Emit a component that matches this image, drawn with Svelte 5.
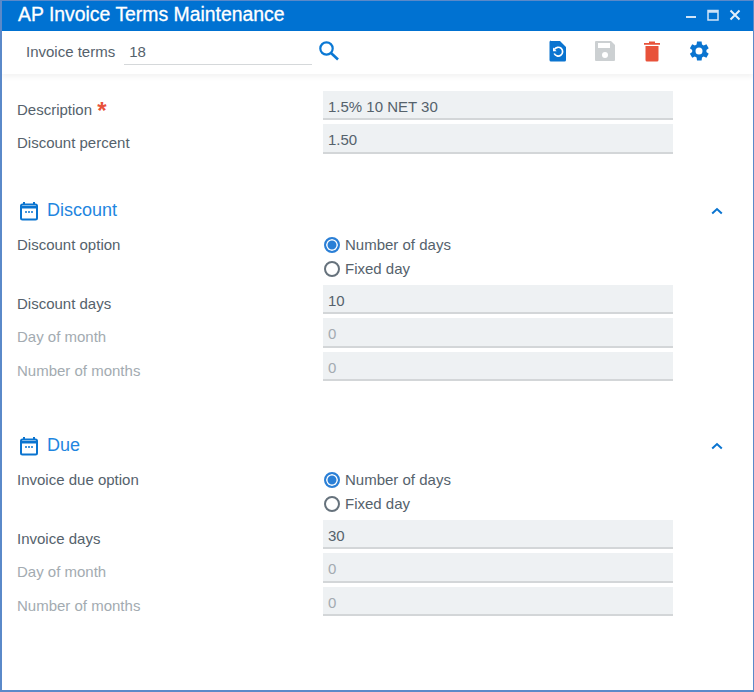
<script lang="ts">
  const sections = [
    {
      title: 'Discount',
      optionLabel: 'Discount option',
      daysLabel: 'Discount days',
      days: '10',
    },
    {
      title: 'Due',
      optionLabel: 'Invoice due option',
      daysLabel: 'Invoice days',
      days: '30',
    },
  ];
</script>

<div class="window">
  <header class="titlebar">
    <h1>AP Invoice Terms Maintenance</h1>
    <div class="window-buttons">
      <svg width="12" height="12" viewBox="0 0 12 12"><path d="M1 8h10" stroke="#cfe3f7" stroke-width="2" /></svg>
      <svg width="12" height="12" viewBox="0 0 12 12"><path d="M1 1.500h10v9.500h-10z M1 3h10" fill="none" stroke="#cfe3f7" stroke-width="1.500" /></svg>
      <svg width="12" height="12" viewBox="0 0 12 12"><path d="M1.500 1.500l9 9M10.500 1.500l-9 9" stroke="#e3effa" stroke-width="2" /></svg>
    </div>
  </header>

  <div class="toolbar">
    <span class="lookup-label">Invoice terms</span>
    <div class="lookup-input">18</div>
    <svg class="search" width="22" height="22" viewBox="0 0 22 22">
      <circle cx="8.500" cy="8.500" r="6.200" fill="none" stroke="#0a78d4" stroke-width="2.200" />
      <path d="M13 13l7 6.500" stroke="#0a78d4" stroke-width="2.600" />
    </svg>
    <div class="actions">
      <svg width="20" height="22" viewBox="0 0 20 22">
        <path d="M3 1h9l6 6v13a1.500 1.500 0 0 1-1.500 1.500h-13.500a1.500 1.500 0 0 1-1.500-1.500v-18a1.500 1.500 0 0 1 1.500-1.500z" fill="#0a74d0" />
        <path d="M6.500 9.300a4.400 4.400 0 1 1-.3 4.200" fill="none" stroke="#fff" stroke-width="1.700" />
        <path d="M5 7.500v3.700h3.700z" fill="#fff" />
      </svg>
      <svg width="22" height="22" viewBox="0 0 22 22">
        <path d="M2 1h15l4 4v15a1 1 0 0 1-1 1h-18a1 1 0 0 1-1-1v-18a1 1 0 0 1 1-1z" fill="#ccd0d2" />
        <rect x="4" y="3" width="12" height="5" fill="#fff" />
        <circle cx="11" cy="15" r="3" fill="#fff" />
      </svg>
      <svg width="18" height="22" viewBox="0 0 18 22">
        <path d="M1 3h16v1.800h-16z M6 1.500h6v2h-6z" fill="#e8523a" />
        <path d="M2.500 6h13v14a1.500 1.500 0 0 1-1.500 1.500h-10a1.500 1.500 0 0 1-1.500-1.500z" fill="#e8523a" />
      </svg>
      <svg width="24" height="24" viewBox="0 0 24 24">
        <path d="M19.400 13a7.600 7.600 0 0 0 0-2l2.300-1.800-2.300-3.900-2.700 1.100a7.500 7.500 0 0 0-1.700-1l-.4-2.900h-4.600l-.4 2.900a7.500 7.500 0 0 0-1.700 1l-2.700-1.100-2.300 3.900 2.300 1.800a7.600 7.600 0 0 0 0 2l-2.300 1.800 2.300 3.900 2.700-1.100a7.500 7.500 0 0 0 1.700 1l.4 2.900h4.600l.4-2.900a7.500 7.500 0 0 0 1.700-1l2.700 1.100 2.300-3.900zM12 15.500a3.500 3.500 0 1 1 0-7 3.500 3.500 0 0 1 0 7z" fill="#0a74d0" />
      </svg>
    </div>
  </div>

  <main class="content">
    <div class="field">
      <label>Description <span class="required">*</span></label>
      <div class="input">1.5% 10 NET 30</div>
    </div>
    <div class="field">
      <label>Discount percent</label>
      <div class="input">1.50</div>
    </div>

    {#each sections as section}
      <section>
        <div class="section-head">
          <svg width="20" height="20" viewBox="0 0 20 20">
            <path d="M5 1v3M15 1v3" stroke="#0a74d0" stroke-width="2" />
            <rect x="2" y="3.500" width="16" height="15" rx="1.500" fill="none" stroke="#0a74d0" stroke-width="2" />
            <path d="M2 5h16v2.500h-16z" fill="#0a74d0" />
            <path d="M6 11h2M9 11h2M12 11h2" stroke="#0a74d0" stroke-width="1.300" />
          </svg>
          <h2>{section.title}</h2>
          <svg class="chevron" width="12" height="8" viewBox="0 0 12 8"><path d="M1.200 6.500l4.800-4.500 4.800 4.500" fill="none" stroke="#0a74d0" stroke-width="2" /></svg>
        </div>
        <div class="option-row">
          <label>{section.optionLabel}</label>
          <div class="radios">
            <div class="radio-row"><span class="radio checked"></span>Number of days</div>
            <div class="radio-row"><span class="radio"></span>Fixed day</div>
          </div>
        </div>
        <div class="field">
          <label>{section.daysLabel}</label>
          <div class="input">{section.days}</div>
        </div>
        <div class="field disabled">
          <label>Day of month</label>
          <div class="input">0</div>
        </div>
        <div class="field disabled">
          <label>Number of months</label>
          <div class="input">0</div>
        </div>
      </section>
    {/each}
  </main>
</div>

<style>
  :global(body) {
    margin: 0;
    background: #fff;
  }

  .window {
    box-sizing: border-box;
    width: 754px;
    height: 692px;
    border: 2px solid #5a89c9;
    border-top-width: 1px;
    border-right-width: 1px;
    font-family: "Liberation Sans", Arial, sans-serif;
    font-size: 15px;
    color: #55626c;
    overflow: hidden;
    background: #fff;
  }

  .titlebar {
    box-sizing: border-box;
    display: flex;
    align-items: center;
    justify-content: space-between;
    height: 30px;
    padding: 0 12px 3px 16px;
    background: #0072d2;
    color: #fff;
  }

  h1 {
    margin: 0;
    font-size: 19.400px;
    font-weight: 400;
    -webkit-text-stroke: 0.3px #fff;
  }

  .window-buttons {
    display: flex;
    align-items: center;
    gap: 10px;
  }

  .toolbar {
    box-sizing: border-box;
    display: flex;
    align-items: center;
    height: 43px;
    padding: 0 42px 3px 24px;
    box-shadow: 0 3px 5px rgba(0, 0, 0, 0.05);
  }

  .lookup-label {
    margin-right: 9px;
  }

  .lookup-input {
    box-sizing: border-box;
    width: 188px;
    height: 27px;
    padding: 5px 5px 0;
    border-bottom: 1px solid #d5d8da;
  }

  .search {
    margin-left: 6px;
  }

  .actions {
    display: flex;
    align-items: center;
    gap: 26.500px;
    margin-left: auto;
  }

  .content {
    padding: 16.750px 0 0 15px;
  }

  .field {
    display: grid;
    grid-template-columns: 306px 350px;
    height: 29.500px;
    margin-bottom: 4px;
  }

  .field label {
    padding-top: 10px;
  }

  label {
    display: block;
  }

  .required {
    margin-left: 1px;
    color: #e8523a;
    font-size: 24px;
    font-weight: 700;
    line-height: 10px;
    vertical-align: -4px;
  }

  .input {
    box-sizing: border-box;
    height: 29.500px;
    padding: 7px 5px 0;
    background: #eef1f3;
    border-bottom: 2px solid #d3d6d8;
  }

  .disabled {
    color: #a3abb1;
  }

  section {
    margin-top: 45px;
  }

  section + section {
    margin-top: 52.500px;
  }

  .section-head {
    display: flex;
    align-items: center;
    gap: 8px;
    height: 24px;
    margin-bottom: 10px;
    padding-left: 2px;
    width: 704px;
  }

  h2 {
    margin: 0;
    font-size: 18px;
    font-weight: 400;
    color: #1f86e0;
  }

  .chevron {
    margin-left: auto;
  }

  .option-row {
    display: grid;
    grid-template-columns: 306px 350px;
    height: 52px;
  }

  .radios {
    display: flex;
    flex-direction: column;
    padding-left: 1px;
  }

  .radio-row {
    display: flex;
    align-items: center;
    gap: 5px;
    height: 24px;
  }

  .option-row label {
    line-height: 24px;
  }

  .radio {
    box-sizing: border-box;
    width: 16px;
    height: 16px;
    border: 2px solid #66727c;
    border-radius: 50%;
    background: #fff;
  }

  .radio.checked {
    border-color: #2a7fd6;
    background: #2a7fd6;
    box-shadow: inset 0 0 0 1.500px #fff;
  }
</style>
